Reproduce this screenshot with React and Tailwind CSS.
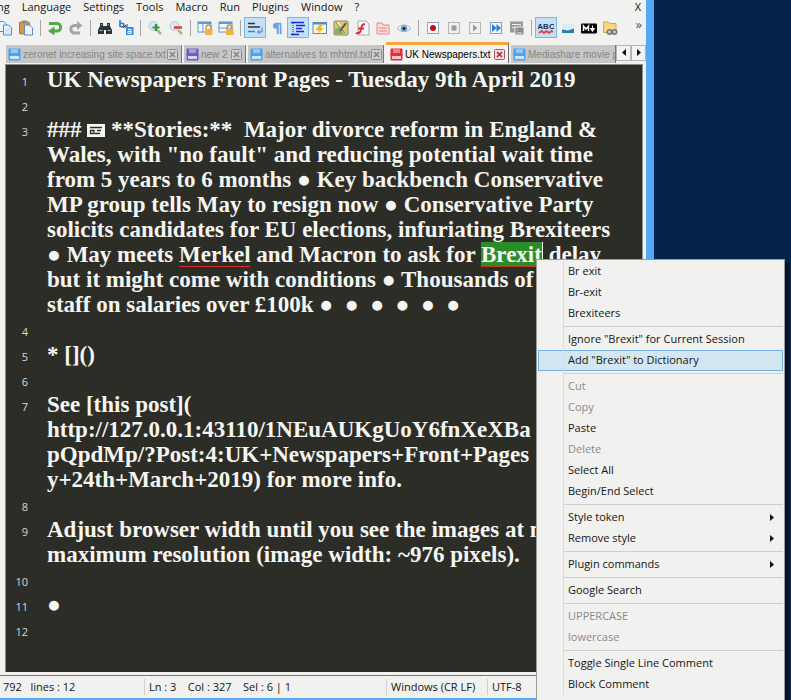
import React from "react";

const Svg = ({ children }) => (
  <svg viewBox="0 0 16 16" className="h-4 w-4 shrink-0" aria-hidden="true">{children}</svg>
);

const page = (x, y) => (
  <path d={`M${x} ${y}h5l3 3v7h-8z`} fill="#eaf3fd" stroke="#4f8fd0" />
);

const icons = {
  Copy: <Svg>{page(1.5, 1.5)}{page(6.5, 5)}<path d="M8 9h5M8 11h5M8 13h5" stroke="#b7d3f0" /></Svg>,
  Paste: <Svg><rect x="1.5" y="2" width="10" height="12" rx="1" fill="#d9983f" stroke="#b8742a" /><rect x="4" y="0.5" width="5" height="3" fill="#8b8f96" />
    <path d="M6.5 5h5l3 3v7h-8z" fill="#eaf3fd" stroke="#5b8cc4" /></Svg>,
  Undo: <Svg><path d="M2 3.500h8a3.700 3.700 0 0 1 0 7.400H6" fill="none" stroke="#55a845" strokeWidth="3" /><path d="M7.500 6.500v9L1 11z" fill="#55a845" /></Svg>,
  Redo: <Svg><path d="M12 13H6.500a3.700 3.700 0 0 1 0-7.400H10" fill="none" stroke="#a3a3a3" strokeWidth="3" /><path d="M9 1v9l5.500-4.500z" fill="#a3a3a3" /></Svg>,
  Find: <Svg><path d="M3 3h3v3h4V3h3v3l2 4v4H9v-4H7v4H1v-4l2-4z" fill="#2f343b" /><path d="M2.5 10.5h3M10.5 10.5h3M4 4.500h1M11 4.500h1" stroke="#a9b3bd" /></Svg>,
  Replace: <Svg><path d="M2 0v7M2 4.500a2 1.800 0 1 1 0 1" fill="none" stroke="#2f7bd6" strokeWidth="1.600" /><path d="M5 8l3-3M9 4v3H6" stroke="#444" fill="none" />
    <rect x="8" y="7" width="7.500" height="8" fill="#3d8be0" /><path d="M10 9.500h3v4h-3v-2h3" stroke="#fff" fill="none" /></Svg>,
  "Zoom in": <Svg><circle cx="6.500" cy="6" r="4.500" fill="#d6e7f6" stroke="#b4c8dc" /><path d="M10 10l4 4" stroke="#c9a873" strokeWidth="2.500" /><path d="M9 4v7M5.500 7.500h7" stroke="#2f9a35" strokeWidth="2.200" /></Svg>,
  "Zoom out": <Svg><circle cx="6.500" cy="6" r="4.500" fill="#d6e7f6" stroke="#b4c8dc" /><path d="M10 10l4 4" stroke="#c9a873" strokeWidth="2.500" /><path d="M6 7.500h8" stroke="#d8404a" strokeWidth="2.600" /></Svg>,
  "Sync vertical": <Svg><rect x="1" y="2" width="13" height="10" fill="#f7fbff" stroke="#5c9ad6" /><path d="M1 3h13" stroke="#5c9ad6" strokeWidth="2" /><path d="M6 4v8" stroke="#5c9ad6" />
    <path d="M9 9V7.500a2.500 2.500 0 0 1 5 0V9" fill="none" stroke="#c78f2e" strokeWidth="1.300" /><rect x="8" y="9" width="7.500" height="6" fill="#f3b23c" /></Svg>,
  "Sync horizontal": <Svg><rect x="1" y="2" width="13" height="10" fill="#f7fbff" stroke="#5c9ad6" /><path d="M1 3h13" stroke="#5c9ad6" strokeWidth="2" /><path d="M1 8h13" stroke="#5c9ad6" />
    <path d="M9 9V7.500a2.500 2.500 0 0 1 5 0V9" fill="none" stroke="#c78f2e" strokeWidth="1.300" /><rect x="8" y="9" width="7.500" height="6" fill="#f3b23c" /></Svg>,
  "Word wrap": <Svg><path d="M1 3.500h7M1 7h12" stroke="#333" strokeWidth="1.500" /><path d="M1 11.500h7" stroke="#3b7fcf" strokeWidth="1.500" /><path d="M15 7.500v4.500h-4M12.500 10l-2 2 2 2" fill="none" stroke="#3b7fcf" /></Svg>,
  "Show all characters": <Svg><path d="M12 3H7a2.800 2.800 0 0 0 0 5.600h1V14h1.500V4.200H11V14h1.400z" fill="#6aa5e4" stroke="#6aa5e4" strokeWidth="0.500" /></Svg>,
  "Indent guide": <Svg><path d="M1 2.500h13M6 5.500h9M6 8.500h6M6 11.500h8M1 14.500h8" stroke="#1c28d8" strokeWidth="1.700" /><path d="M3 3v11" stroke="#1c28d8" strokeDasharray="1 1" /></Svg>,
  "User language": <Svg><rect x="1" y="2.500" width="13.500" height="11" fill="#fff6cf" stroke="#4f8fd0" /><path d="M1 3.500h13.500" stroke="#4f8fd0" strokeWidth="2" /><path d="M8 4.500L3.500 10H7l-1.500 3.500 6.500-5.500H8.500l2.500-3.500z" fill="#f0b429" /></Svg>,
  "Document map": <Svg><rect x="1" y="1" width="14" height="14" rx="1" fill="#dccb6a" stroke="#86867c" /><path d="M2 9l4-2 5 7H2z" fill="#86b06a" /><path d="M3 4l3-2 2 5z" fill="#f2edd8" /><path d="M13 3l-6 8" stroke="#555" strokeWidth="2" /><path d="M3 3l9 10" stroke="#7b7b5c" /></Svg>,
  "Function list": <Svg><path d="M4 1h8l3 3v11H4z" fill="#fafafa" stroke="#a9a9a9" /><path d="M11 4.500q-3-1-3.500 3L6.500 11q-1 3-4.500 2M4 8.500h6" fill="none" stroke="#d92b3c" strokeWidth="2" /></Svg>,
  "Folder workspace": <Svg><path d="M2 3h5l1 2h6v9H2z" fill="#fbdcdc" stroke="#e08a8a" /><path d="M4 8h8M4 11h8" stroke="#e08a8a" /></Svg>,
  Monitoring: <Svg><path d="M1 8.500Q8 1 15 8.500 8 15 1 8.500z" fill="#f7f7f7" stroke="#b5b5b5" /><circle cx="8" cy="8.500" r="3.300" fill="#6aaade" /><circle cx="8" cy="8.500" r="1.500" fill="#222" /></Svg>,
  Record: <Svg><rect x="2.500" y="2.500" width="11" height="11" fill="#fff" stroke="#8ba5c0" /><circle cx="8" cy="8" r="3" fill="#cf0b12" /></Svg>,
  Stop: <Svg><rect x="2.500" y="2.500" width="11" height="11" fill="#f1f1f1" stroke="#b5b5b5" /><path d="M5.500 5.500h5v5h-5z" fill="#9b9b9b" /></Svg>,
  Play: <Svg><rect x="2.500" y="2.500" width="11" height="11" fill="#f1f1f1" stroke="#b5b5b5" /><path d="M6 4.500v7L10.500 8z" fill="#9b9b9b" /></Svg>,
  "Play many times": <Svg><rect x="2.500" y="2.500" width="11" height="11" fill="#eef6ff" stroke="#7f9fc4" /><path d="M4 4v8L8.500 8zM8.500 4v8l4.500-4z" fill="#2d78d8" /></Svg>,
  "Save macro": <Svg><path d="M1 1.500h13v11H1z" fill="#9a9a9a" /><path d="M3 4.500h9M3 7.500h3" stroke="#eee" /><rect x="6" y="7" width="9" height="8" fill="#8a8a8a" stroke="#eee" /><path d="M8 10h1M8 13h5" stroke="#eee" /></Svg>,
  "Spell check": <Svg><text x="8" y="9" textAnchor="middle" fontSize="8" fontWeight="bold" fontFamily="Liberation Sans, sans-serif" fill="#1d2c52">ABC</text>
    <path d="M1 13l2.500-2 2.500 2 2.500-2 2.500 2 2.500-2 1.500 1" fill="none" stroke="#e04848" strokeWidth="2" /></Svg>,
  Image: <Svg><rect x="2" y="4" width="12" height="9" fill="#d8eefb" /><path d="M2 9.500l6 1 6-2v4.500H2z" fill="#2a7fa5" /></Svg>,
  Markdown: <Svg><rect x="0" y="3.500" width="16" height="10" rx="1" fill="#050505" /><path d="M2.500 11V6L5 9l2.500-3v5" fill="none" stroke="#fff" strokeWidth="1.500" /><path d="M11.500 5.500v4M9.500 8.500h4l-2 3z" fill="#fff" stroke="#fff" /></Svg>,
  "Find in files": <Svg><path d="M1.500 2h5l1 1.500h6.500v9H1.500z" fill="#f8d981" stroke="#d3a64a" /><circle cx="7.500" cy="12" r="2.200" fill="#ccc" stroke="#777" strokeWidth="1.500" /><circle cx="12.500" cy="12" r="2.200" fill="#ccc" stroke="#777" strokeWidth="1.500" /></Svg>,
};

const toolGroups = [
  ["Copy", "Paste"],
  ["Undo", "Redo"],
  ["Find", "Replace"],
  ["Zoom in", "Zoom out"],
  ["Sync vertical", "Sync horizontal"],
  ["Word wrap", "Show all characters", "Indent guide", "User language", "Document map", "Function list", "Folder workspace", "Monitoring"],
  ["Record", "Stop", "Play", "Play many times", "Save macro"],
  ["Spell check", "Image", "Markdown", "Find in files"],
];
const pressed = ["Word wrap", "Indent guide", "Spell check"];

function Toolbar() {
  return (
    <div className="flex h-[23px] items-center overflow-hidden">
      <div className="-ml-[6px] flex items-center">
        {toolGroups.map((group, i) => (
          <React.Fragment key={i}>
            {i > 0 && <div className="flex w-2 justify-center"><div className="h-4 w-px bg-[#a6a6a6]" /></div>}
            {group.map((name) => (
              <button
                key={name}
                aria-label={name}
                className={
                  pressed.includes(name)
                    ? "flex h-[21px] w-[22px] items-center justify-center border border-[#7ab4e8] bg-[#c3e0f8]"
                    : "flex h-[21px] w-[21px] items-center justify-center"
                }
              >
                {icons[name]}
              </button>
            ))}
          </React.Fragment>
        ))}
      </div>
      <button aria-label="More tools" className="mr-1 ml-auto self-start text-[13px] leading-4 text-[#3f4f8f]">»</button>
    </div>
  );
}

const Disk = ({ color }) => (
  <svg viewBox="0 0 13 13" className="h-[13px] w-[13px] shrink-0" aria-hidden="true">
    <rect x="0.500" y="0.500" width="12" height="12" rx="1" fill={color} />
    <path d="M3 1h7v4H3z" fill="#ffffff66" />
    <path d="M2 8h9v3H2z" fill="#ffffffbb" />
    <path d="M0 6.500h13" stroke={color} />
  </svg>
);

const Close = ({ active }) => (
  <svg viewBox="0 0 11 11" className="h-[11px] w-[11px] shrink-0" aria-hidden="true">
    <rect x="0.500" y="0.500" width="10" height="10" rx="1" fill={active ? "#f5dfe1" : "#cfcfcf"} stroke={active ? "#a85560" : "#8c8c8c"} />
    <path d="M3 3l5 5M8 3L3 8" stroke={active ? "#b02a3a" : "#858585"} strokeWidth="1.700" />
  </svg>
);

const Arrow = ({ d }) => (
  <svg viewBox="0 0 4 7" className="h-[7px] w-1" aria-hidden="true"><path d={d} fill="#111" /></svg>
);
const LEFT = "M4 0v7L0 3.500z";
const RIGHT = "M0 0v7l4-3.500z";

const tabs = [
  { name: "zeronet increasing site space.txt", color: "#4da3ee", size: "w-[176px]" },
  { name: "new 2", color: "#6a5fc0", size: "w-[62px]" },
  { name: "alternatives to mhtml.txt", color: "#4da3ee", size: "w-[136px]" },
  { name: "UK Newspapers.txt", color: "#e0303a", size: "w-[123px]", active: true },
  { name: "Mediashare movie p", color: "#4da3ee", size: "min-w-0 flex-1", cut: true },
];

function Tabs() {
  return (
    <div className="flex h-[21px] items-end pl-[6px]" role="tablist">
      <div className="flex min-w-0 flex-1 items-end gap-[2px]">
        {tabs.map((t) => (
          <button
            key={t.name}
            role="tab"
            aria-selected={!!t.active}
            className={
              "flex items-center overflow-hidden pr-[3px] font-['Liberation_Sans',sans-serif] text-[10px] whitespace-nowrap " +
              t.size +
              (t.active
                ? " h-[21px] border-t-[3px] border-r border-t-[#f7a63c] border-r-[#666] bg-[#f3f3f3] pl-[4px] text-black"
                : " h-[18px] border-r border-[#777] bg-[#c6c6c6] pl-[2px] text-[#858585]")
            }
          >
            <Disk color={t.color} />
            <span className="pl-[2px]">{t.name}</span>
            {!t.cut && <span className="ml-auto"><Close active={t.active} /></span>}
          </button>
        ))}
      </div>
      <button aria-label="Scroll tabs left" className="flex h-4 w-[15px] items-center justify-center self-center border border-[#b5b5b5] bg-[#f3f3f3]"><Arrow d={LEFT} /></button>
      <button aria-label="Scroll tabs right" className="flex h-4 w-[15px] items-center justify-center self-center border border-[#b5b5b5] bg-[#f3f3f3]"><Arrow d={RIGHT} /></button>
    </div>
  );
}

const Newspaper = () => (
  <svg viewBox="0 0 18 13" className="inline-block h-[13px] w-[18px] align-baseline" role="img" aria-label="newspaper">
    <rect width="18" height="13" fill="#f5f5f2" />
    <path d="M3 3.500h12M3.500 6.500h3.500v3H3.500zM10 6.500h4M8 9.500h5" fill="none" stroke="#2d2d28" strokeWidth="1.300" />
  </svg>
);

const doc = [
  ["UK Newspapers Front Pages - Tuesday 9th April 2019"],
  [""],
  [
    <>### <Newspaper /> **Stories:**{"  "}Major divorce reform in England &amp;</>,
    'Wales, with "no fault" and reducing potential wait time',
    "from 5 years to 6 months ● Key backbench Conservative",
    "MP group tells May to resign now ● Conservative Party",
    "solicits candidates for EU elections, infuriating Brexiteers",
    <>● May meets <span className="underline decoration-[#d42a2a] decoration-1 underline-offset-4">Merkel</span> and Macron to ask for <span className="border-r border-white bg-[#2a8c2a] underline decoration-[#b5401f] decoration-1 underline-offset-4">Brexit</span> delay,</>,
    "but it might come with conditions ● Thousands of",
    "staff on salaries over £100k ●  ●  ●  ●  ●  ●",
  ],
  [""],
  ["* []()"],
  [""],
  ["See [this post](", "http://127.0.0.1:43110/1NEuAUKgUoY6fnXeXBa", "pQpdMp/?Post:4:UK+Newspapers+Front+Pages", "y+24th+March+2019) for more info."],
  [""],
  ["Adjust browser width until you see the images at m", "maximum resolution (image width: ~976 pixels)."],
  [""],
  ["●"],
  [""],
];

function Editor() {
  return (
    <div className="mr-[3px] ml-[5px] flex-1 overflow-hidden border-t border-r border-l border-[#8d8d8d] bg-[#2d2d28] pt-[2px]">
      {doc.map((rows, i) => (
        <div key={i} className="flex">
          <div className="w-[22px] shrink-0 pt-[5px] text-right text-[11px] leading-[19px] text-[#d8d8d4]">{i + 1}</div>
          <div className="ml-[19px] font-['Liberation_Serif',serif] text-[23px] leading-[25px] font-bold whitespace-pre text-[#f5f5f2]">
            {rows.map((r, j) => <div key={j} className="h-[25px]">{r}</div>)}
          </div>
        </div>
      ))}
    </div>
  );
}

const menuGroups = [
  ["Br exit", "Br-exit", "Brexiteers"],
  ['Ignore "Brexit" for Current Session', 'Add "Brexit" to Dictionary'],
  ["Cut", "Copy", "Paste", "Delete", "Select All", "Begin/End Select"],
  ["Style token", "Remove style"],
  ["Plugin commands"],
  ["Google Search"],
  ["UPPERCASE", "lowercase"],
  ["Toggle Single Line Comment", "Block Comment"],
];
const disabled = ["Cut", "Copy", "Delete", "UPPERCASE", "lowercase"];
const submenus = ["Style token", "Remove style", "Plugin commands"];

function ContextMenu() {
  return (
    <div role="menu" className="absolute top-[259px] bottom-0 left-[536px] w-[249px] overflow-hidden border border-b-0 border-[#9a9a9a] bg-[#f1f1f0] px-px pt-px shadow-[4px_4px_3px_rgba(0,0,0,0.45)]">
      {menuGroups.map((g, i) => (
        <div key={i}>
          {i > 0 && <div className="flex h-[5px] items-center"><div className="h-[5px] w-[26px] border-r border-[#dcdcdc]" /><div className="h-px flex-1 bg-[#cfcfcf]" /></div>}
          {g.map((label) => (
            <button
              key={label}
              role="menuitem"
              disabled={disabled.includes(label)}
              className={
                "flex h-[21px] w-full items-center border text-left " +
                (label.startsWith("Add") ? "border-[#78b0e4] bg-[#d2e7f2]" : "border-transparent") +
                (disabled.includes(label) ? " text-[#8a8a8a]" : " text-[#151515]")
              }
            >
              <span className="h-[21px] w-[25px] shrink-0 border-r border-[#dcdcdc]" />
              <span className="flex-1 pl-[4px]">{label}</span>
              {submenus.includes(label) && <span className="pr-2"><Arrow d={RIGHT} /></span>}
            </button>
          ))}
        </div>
      ))}
    </div>
  );
}

export default function App() {
  return (
    <div className="relative flex h-screen overflow-hidden bg-[#04234b] font-['Open_Sans','Noto_Sans',sans-serif] text-[11px] text-[#151515]">
      <div className="flex min-w-0 flex-1 flex-col bg-[#f1f1f0]">
        <div className="-ml-[3px] flex h-[15px] items-center gap-3 pr-[5px]">
          {["ng", "Language", "Settings", "Tools", "Macro", "Run", "Plugins", "Window", "?"].map((m) => <button key={m}>{m}</button>)}
          <button className="ml-auto" aria-label="Close document">X</button>
        </div>
        <div className="h-px" />
        <Toolbar />
        <div className="h-[3px]" />
        <Tabs />
        <div className="h-px" />
        <Editor />
        <div className="mt-[2px] h-[2px] border-b border-[#777]" />
        <div className="flex h-[22px] items-center whitespace-pre">
          <div className="w-[145px] border-r border-[#cfcfcf] pl-[3px]">792   lines : 12</div>
          <div className="w-[242px] border-r border-[#cfcfcf] pl-[4px]">Ln : 3    Col : 327    Sel : 6 | 1</div>
          <div className="w-[101px] border-r border-[#cfcfcf] pl-[4px]">Windows (CR LF)</div>
          <div className="pl-[4px]">UTF-8</div>
        </div>
        <div className="h-[2px] bg-[#55a8f5]" />
      </div>
      <div className="w-2 bg-[#55a8f5]" />
      <div className="w-[137px]" />
      <ContextMenu />
    </div>
  );
}
